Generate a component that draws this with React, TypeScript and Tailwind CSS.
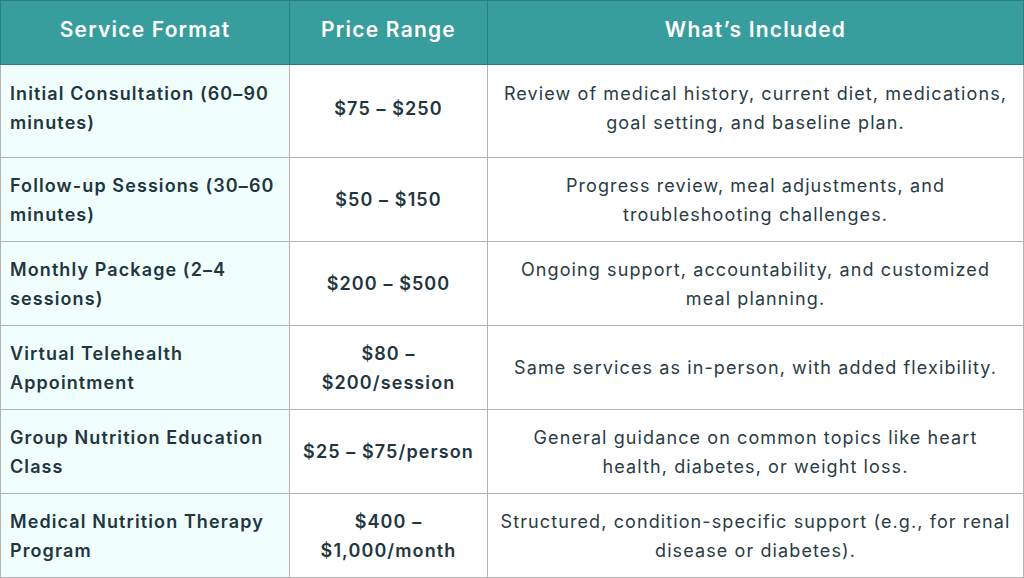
const rows = [
  {
    service: ["Initial Consultation (60–90", "minutes)"],
    price: ["$75 – $250"],
    included: ["Review of medical history, current diet, medications,", "goal setting, and baseline plan."],
    h: "h-[93px]",
    pad: "pb-[6px]",
  },
  {
    service: ["Follow-up Sessions (30–60", "minutes)"],
    price: ["$50 – $150"],
    included: ["Progress review, meal adjustments, and", "troubleshooting challenges."],
    h: "h-[84px]",
    pad: "",
  },
  {
    service: ["Monthly Package (2–4", "sessions)"],
    price: ["$200 – $500"],
    included: ["Ongoing support, accountability, and customized", "meal planning."],
    h: "h-[84px]",
    pad: "",
  },
  {
    service: ["Virtual Telehealth", "Appointment"],
    price: ["$80 –", "$200/session"],
    included: ["Same services as in-person, with added flexibility."],
    h: "h-[84px]",
    pad: "",
  },
  {
    service: ["Group Nutrition Education", "Class"],
    price: ["$25 – $75/person"],
    included: ["General guidance on common topics like heart", "health, diabetes, or weight loss."],
    h: "h-[84px]",
    pad: "",
  },
  {
    service: ["Medical Nutrition Therapy", "Program"],
    price: ["$400 –", "$1,000/month"],
    included: ["Structured, condition-specific support (e.g., for renal", "disease or diabetes)."],
    h: "h-[84px]",
    pad: "",
  },
];

const Lines = ({ lines }: { lines: string[] }) => (
  <>
    {lines.map((l, i) => (
      <span key={i} className="block whitespace-nowrap">
        {l}
      </span>
    ))}
  </>
);

const App = () => {
  return (
    <div className="w-[1024px] h-[578px] bg-white font-['Inter','Noto_Sans',sans-serif] text-[#233640]">
      <table className="w-full border-collapse table-fixed">
        <colgroup>
          <col className="w-[289px]" />
          <col className="w-[198px]" />
          <col />
        </colgroup>
        <thead>
          <tr className="h-[64px] bg-[#379d9d] text-white text-[21px] tracking-[1.2px] font-semibold">
            <th className="border border-[#2c7f80] pb-[6px] font-semibold">Service Format</th>
            <th className="border border-[#2c7f80] pb-[6px] font-semibold">Price Range</th>
            <th className="border border-[#2c7f80] pb-[6px] font-semibold">What’s Included</th>
          </tr>
        </thead>
        <tbody className="text-[18px] leading-[29px] tracking-[1.1px]">
          {rows.map((r, i) => (
            <tr key={i} className={r.h}>
              <td className={`border border-[#b3b3b3] bg-[#f0fffd] pl-[9px] pr-1 font-semibold align-middle ${r.pad}`}>
                <Lines lines={r.service} />
              </td>
              <td className={`border border-[#b3b3b3] text-center font-semibold align-middle ${r.pad}`}>
                <Lines lines={r.price} />
              </td>
              <td className={`border border-[#b3b3b3] text-center text-[#2a3c45] align-middle ${r.pad}`}>
                <Lines lines={r.included} />
              </td>
            </tr>
          ))}
        </tbody>
      </table>
    </div>
  );
};

export default App;
